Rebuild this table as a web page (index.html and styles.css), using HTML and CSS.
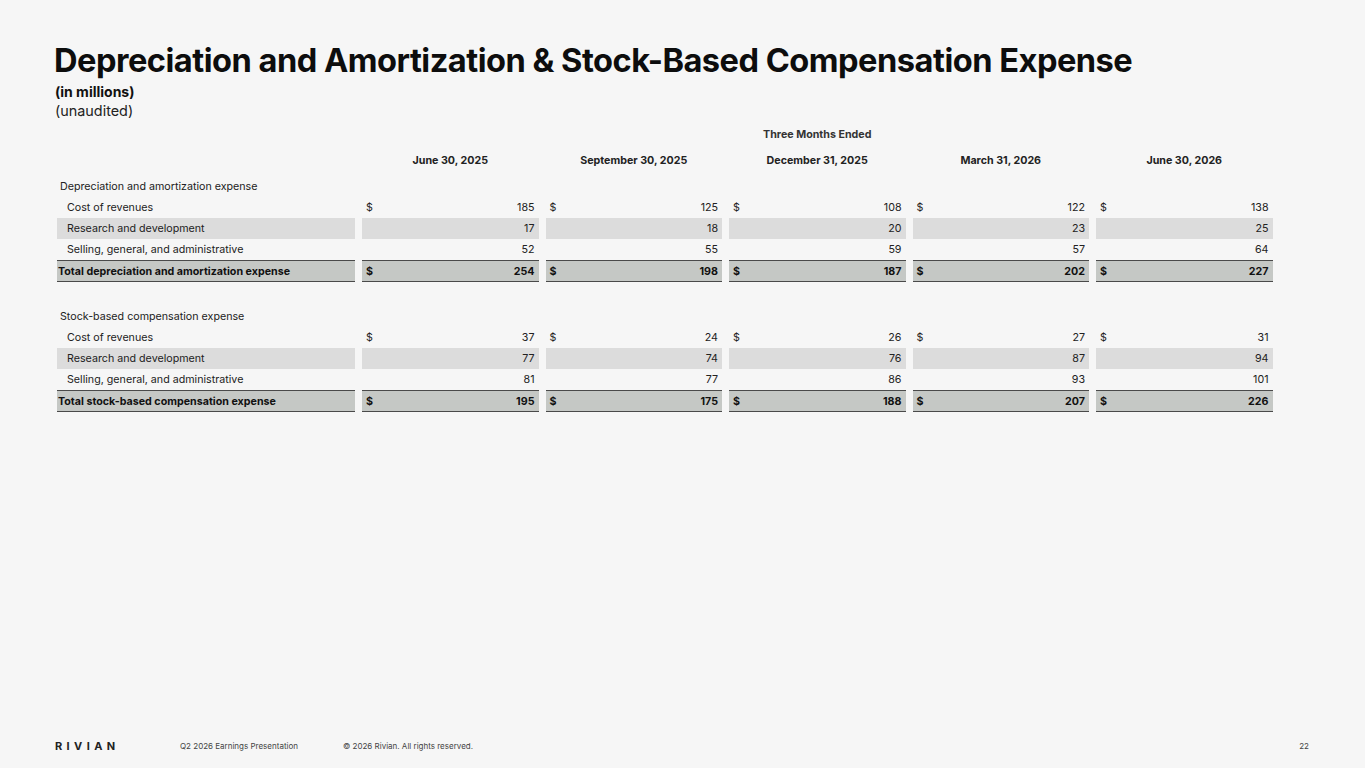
FILE: index.html
```html
<!DOCTYPE html>
<html lang="en">
<head>
<meta charset="utf-8">
<title>Depreciation and Amortization &amp; Stock-Based Compensation Expense</title>
<link rel="stylesheet" href="styles.css">
</head>
<body>
<div class="slide">
  <header class="head">
    <h1 class="title">Depreciation and Amortization &amp; Stock-Based Compensation Expense</h1>
    <div class="sub-bold">(in millions)</div>
    <div class="sub">(unaudited)</div>
  </header>

  <section class="table">
    <div class="row caption-row">
      <div></div>
      <div class="span-all">Three Months Ended</div>
    </div>
    <div class="row date-row">
      <div></div>
      <div class="date">June 30, 2025</div>
      <div class="date">September 30, 2025</div>
      <div class="date">December 31, 2025</div>
      <div class="date">March 31, 2026</div>
      <div class="date">June 30, 2026</div>
    </div>

    <div class="row group-row"><div class="label">Depreciation and amortization expense</div></div>
    <div class="row">
      <div class="label sub-label">Cost of revenues</div>
      <div class="val"><span>$</span><span>185</span></div>
      <div class="val"><span>$</span><span>125</span></div>
      <div class="val"><span>$</span><span>108</span></div>
      <div class="val"><span>$</span><span>122</span></div>
      <div class="val"><span>$</span><span>138</span></div>
    </div>
    <div class="row shaded">
      <div class="label sub-label">Research and development</div>
      <div class="val"><span></span><span>17</span></div>
      <div class="val"><span></span><span>18</span></div>
      <div class="val"><span></span><span>20</span></div>
      <div class="val"><span></span><span>23</span></div>
      <div class="val"><span></span><span>25</span></div>
    </div>
    <div class="row">
      <div class="label sub-label">Selling, general, and administrative</div>
      <div class="val"><span></span><span>52</span></div>
      <div class="val"><span></span><span>55</span></div>
      <div class="val"><span></span><span>59</span></div>
      <div class="val"><span></span><span>57</span></div>
      <div class="val"><span></span><span>64</span></div>
    </div>
    <div class="row total">
      <div class="label">Total depreciation and amortization expense</div>
      <div class="val"><span>$</span><span>254</span></div>
      <div class="val"><span>$</span><span>198</span></div>
      <div class="val"><span>$</span><span>187</span></div>
      <div class="val"><span>$</span><span>202</span></div>
      <div class="val"><span>$</span><span>227</span></div>
    </div>

    <div class="row group-row second"><div class="label">Stock-based compensation expense</div></div>
    <div class="row">
      <div class="label sub-label">Cost of revenues</div>
      <div class="val"><span>$</span><span>37</span></div>
      <div class="val"><span>$</span><span>24</span></div>
      <div class="val"><span>$</span><span>26</span></div>
      <div class="val"><span>$</span><span>27</span></div>
      <div class="val"><span>$</span><span>31</span></div>
    </div>
    <div class="row shaded">
      <div class="label sub-label">Research and development</div>
      <div class="val"><span></span><span>77</span></div>
      <div class="val"><span></span><span>74</span></div>
      <div class="val"><span></span><span>76</span></div>
      <div class="val"><span></span><span>87</span></div>
      <div class="val"><span></span><span>94</span></div>
    </div>
    <div class="row">
      <div class="label sub-label">Selling, general, and administrative</div>
      <div class="val"><span></span><span>81</span></div>
      <div class="val"><span></span><span>77</span></div>
      <div class="val"><span></span><span>86</span></div>
      <div class="val"><span></span><span>93</span></div>
      <div class="val"><span></span><span>101</span></div>
    </div>
    <div class="row total">
      <div class="label">Total stock-based compensation expense</div>
      <div class="val"><span>$</span><span>195</span></div>
      <div class="val"><span>$</span><span>175</span></div>
      <div class="val"><span>$</span><span>188</span></div>
      <div class="val"><span>$</span><span>207</span></div>
      <div class="val"><span>$</span><span>226</span></div>
    </div>
  </section>

  <footer class="foot">
    <div class="logo">RIVIAN</div>
    <div class="foot-text">Q2 2026 Earnings Presentation</div>
    <div class="foot-text copy">© 2026 Rivian. All rights reserved.</div>
    <div class="page">22</div>
  </footer>
</div>
</body>
</html>
```

FILE: styles.css
```css
html, body {
  margin: 0;
  padding: 0;
  background: #f6f6f6;
}

body {
  font-family: Inter, "Noto Sans", "Liberation Sans", sans-serif;
  color: #1c1c1c;
}

.slide {
  width: 1365px;
  height: 768px;
  box-sizing: border-box;
  display: flex;
  flex-direction: column;
}

.head {
  padding: 40px 0 0 54px;
}

.title {
  margin: 0;
  font-size: 32.6px;
  font-weight: 700;
  letter-spacing: -0.5px;
  line-height: 40px;
  color: #0d0d0d;
}

.sub-bold {
  margin-top: 3px;
  margin-left: 1px;
  font-size: 14px;
  font-weight: 700;
  line-height: 18px;
  color: #111;
}

.sub {
  margin-left: 1px;
  font-size: 14.4px;
  line-height: 20px;
  color: #222;
}

.table {
  padding-left: 57px;
  margin-top: 2px;
  font-size: 10.7px;
  color: #222;
}

.row {
  display: grid;
  grid-template-columns: 298px repeat(5, 176.5px);
  column-gap: 7px;
  height: 21px;
  align-items: stretch;
}

.row > div {
  display: flex;
  align-items: center;
}

.caption-row {
  height: 23px;
}

.caption-row .span-all {
  grid-column: 2 / span 5;
  justify-content: center;
  font-weight: 700;
  color: #333;
}

.date-row {
  height: 28px;
  margin-bottom: 2px;
}

.date {
  justify-content: center;
  font-weight: 700;
  color: #222;
}

.label {
  padding-left: 3px;
}

.sub-label {
  padding-left: 10px;
}

.group-row.second {
  margin-top: 24px;
}

.val {
  justify-content: space-between;
  padding: 0 4px 0 4px;
}

.shaded > div {
  background: #dcdcdc;
}

.total {
  height: 22px;
}

.total > div {
  background: #c5c8c5;
  border-top: 1.5px solid #4a4a4a;
  border-bottom: 1.5px solid #4a4a4a;
  box-sizing: border-box;
  font-weight: 700;
  color: #111;
}

.total .label {
  padding-left: 1px;
}

.foot {
  margin-top: auto;
  height: 28px;
  display: flex;
  align-items: flex-start;
  padding: 0 56px 0 55px;
  font-size: 8px;
  color: #444;
}

.logo {
  font-size: 11px;
  font-weight: 700;
  letter-spacing: 4.4px;
  color: #222;
  line-height: 12px;
  width: 125px;
}

.foot-text {
  line-height: 12px;
  width: 163px;
}

.copy {
  width: auto;
}

.page {
  margin-left: auto;
  line-height: 12px;
}
```
